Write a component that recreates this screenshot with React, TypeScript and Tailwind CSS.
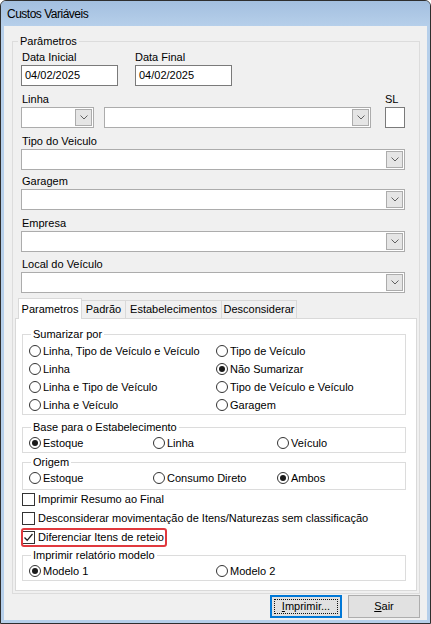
import React from "react";

const Chevron = () => (
  <svg width="8" height="5" viewBox="0 0 8 5">
    <path d="M0.5 0.5 L4 4 L7.5 0.5" fill="none" stroke="#606060" strokeWidth="1" />
  </svg>
);

function Combo({ className = "" }: { className?: string }) {
  return (
    <div className={`h-[21px] border border-[#acacac] bg-white flex items-center justify-end pr-px ${className}`}>
      <div className="w-[17px] h-[17px] border border-[#acacac] bg-[#e5e5e5] flex items-center justify-center">
        <Chevron />
      </div>
    </div>
  );
}

function Radio({ label, checked = false }: { label: string; checked?: boolean }) {
  return (
    <div className="flex items-center h-[18px]">
      <span className="w-[12px] h-[12px] rounded-full border border-[#333333] bg-white flex items-center justify-center shrink-0">
        {checked && <span className="w-[6px] h-[6px] rounded-full bg-[#1a1a1a]" />}
      </span>
      <span className="ml-[2px] whitespace-nowrap">{label}</span>
    </div>
  );
}

function Check({ label, checked = false }: { label: string; checked?: boolean }) {
  return (
    <div className="flex items-center h-[19px]">
      <span className="w-[13px] h-[13px] border border-[#333333] bg-white flex items-center justify-center shrink-0">
        {checked && (
          <svg width="11" height="11" viewBox="0 0 11 11">
            <path d="M1.5 5.5 L4.2 8.3 L9.5 2" fill="none" stroke="#222" strokeWidth="1.3" />
          </svg>
        )}
      </span>
      <span className="ml-[3px] whitespace-nowrap">{label}</span>
    </div>
  );
}

function Group({ title, children, className = "" }: { title: string; children: React.ReactNode; className?: string }) {
  return (
    <fieldset className={`border border-[#dcdcdc] ${className}`}>
      <legend className="ml-[8px] px-[2px] leading-[13px]">{title}</legend>
      {children}
    </fieldset>
  );
}

function Label({ children, className = "" }: { children: React.ReactNode; className?: string }) {
  return <div className={`h-[13px] leading-[13px] whitespace-nowrap ${className}`}>{children}</div>;
}

export default function App() {
  return (
    <div className="w-[431px] h-[624px] font-['Liberation_Sans',Arial,sans-serif] text-[11px] leading-[13px] text-black">
      <div className="w-full h-full flex flex-col border border-[#2e2e2e] rounded-t-[6px] overflow-hidden bg-[#b6cfea]">
        <div className="h-[25px] shrink-0 flex items-center pl-[6px] pt-px text-[12px] tracking-[-0.5px] bg-gradient-to-b from-[#a3bfdf] to-[#b6cfea]">
          Custos Variáveis
        </div>
        <div className="flex-1 mx-[3px] mb-[3px] bg-[#f0f0f0] flex flex-col">
          <fieldset className="mt-[9px] ml-[8px] mr-[7px] border border-[#dcdcdc] pb-[2px]">
            <legend className="ml-[5px] px-[2px] leading-[13px]">Parâmetros</legend>
            <div className="pl-[8px] pr-[14px] pt-[3px]">
              <div className="flex">
                <div className="w-[97px]">
                  <Label className="pl-px">Data Inicial</Label>
                  <div className="mt-px h-[21px] border border-[#7a7a7a] bg-white pl-[3px] flex items-center">04/02/2025</div>
                </div>
                <div className="w-[97px] ml-[17px]">
                  <Label>Data Final</Label>
                  <div className="mt-px h-[21px] border border-[#7a7a7a] bg-white pl-[3px] flex items-center">04/02/2025</div>
                </div>
              </div>

              <div className="flex mt-[7px]">
                <div className="w-[73px]">
                  <Label className="pl-px">Linha</Label>
                  <Combo className="mt-px" />
                </div>
                <div className="flex-1 ml-[10px]">
                  <Label> </Label>
                  <Combo className="mt-px" />
                </div>
                <div className="w-[20px] ml-[14px]">
                  <Label>SL</Label>
                  <div className="mt-px h-[21px] border border-[#7a7a7a] bg-white" />
                </div>
              </div>

              <Label className="mt-[7px] pl-px">Tipo do Veiculo</Label>
              <Combo className="mt-px" />
              <Label className="mt-[5px] pl-px">Garagem</Label>
              <Combo className="mt-px" />
              <Label className="mt-[7px] pl-px">Empresa</Label>
              <Combo className="mt-px" />
              <Label className="mt-[6px] pl-px">Local do Veículo</Label>
              <Combo className="mt-px" />
            </div>

            <div className="mt-[5px] mx-[2px]">
              <div className="flex items-end pl-[3px] h-[21px] -mb-px relative z-10">
                <div className="h-[21px] w-[64px] border border-b-0 border-[#d9d9d9] bg-white flex items-center justify-center">
                  Parametros
                </div>
                <div className="h-[18px] w-[44px] mb-px border-t border-r border-[#d9d9d9] bg-[#f0f0f0] flex items-center justify-center">
                  Padrão
                </div>
                <div className="h-[18px] w-[96px] mb-px border-t border-r border-[#d9d9d9] bg-[#f0f0f0] flex items-center justify-center">
                  Estabelecimentos
                </div>
                <div className="h-[18px] w-[75px] mb-px border-t border-r border-[#d9d9d9] bg-[#f0f0f0] flex items-center justify-center">
                  Desconsiderar
                </div>
              </div>
              <div className="border border-[#d9d9d9] bg-white pt-[9px] pb-[9px]">
                <Group title="Sumarizar por" className="ml-[6px] mr-[10px]">
                  <div className="grid grid-cols-[187px_1fr] pl-[6px] pt-px">
                    <Radio label="Linha, Tipo de Veículo e Veículo" />
                    <Radio label="Tipo de Veículo" />
                    <Radio label="Linha" />
                    <Radio label="Não Sumarizar" checked />
                    <Radio label="Linha e Tipo de Veículo" />
                    <Radio label="Tipo de Veículo e Veículo" />
                    <Radio label="Linha e Veículo" />
                    <Radio label="Garagem" />
                  </div>
                </Group>

                <Group title="Base para o Estabelecimento" className="ml-[6px] mr-[10px] mt-[6px]">
                  <div className="grid grid-cols-[124px_124px_1fr] pl-[6px]">
                    <Radio label="Estoque" checked />
                    <Radio label="Linha" />
                    <Radio label="Veículo" />
                  </div>
                </Group>

                <Group title="Origem" className="ml-[6px] mr-[10px] mt-[3px] pb-[2px]">
                  <div className="grid grid-cols-[124px_124px_1fr] pl-[6px]">
                    <Radio label="Estoque" />
                    <Radio label="Consumo Direto" />
                    <Radio label="Ambos" checked />
                  </div>
                </Group>

                <div className="pl-[6px]">
                  <Check label="Imprimir Resumo ao Final" />
                  <Check label="Desconsiderar movimentação de Itens/Naturezas sem classificação" />
                  <div className="relative">
                    <Check label="Diferenciar Itens de reteio" checked />
                    <span className="absolute left-[-1px] top-0 w-[146px] h-[19px] border-2 border-[#e0393e] rounded-[3px] pointer-events-none" />
                  </div>
                </div>

                <Group title="Imprimir relatório modelo" className="ml-[6px] mr-[10px] mt-[2px]">
                  <div className="grid grid-cols-[187px_1fr] pl-[6px]">
                    <Radio label="Modelo 1" checked />
                    <Radio label="Modelo 2" />
                  </div>
                </Group>
              </div>
            </div>
          </fieldset>

          <div className="flex justify-end gap-[6px] mr-[7px] mt-px">
            <div className="w-[72px] h-[23px] border border-[#0078d7] shadow-[inset_0_0_0_1px_#0078d7] bg-[#e1e1e1] p-[3px]">
              <div className="w-full h-full border border-dotted border-[#111] flex items-center justify-center">
                <span><span className="underline">I</span>mprimir...</span>
              </div>
            </div>
            <div className="w-[72px] h-[23px] border border-[#adadad] bg-[#e1e1e1] flex items-center justify-center">
              <span><span className="underline">S</span>air</span>
            </div>
          </div>
        </div>
      </div>
    </div>
  );
}
